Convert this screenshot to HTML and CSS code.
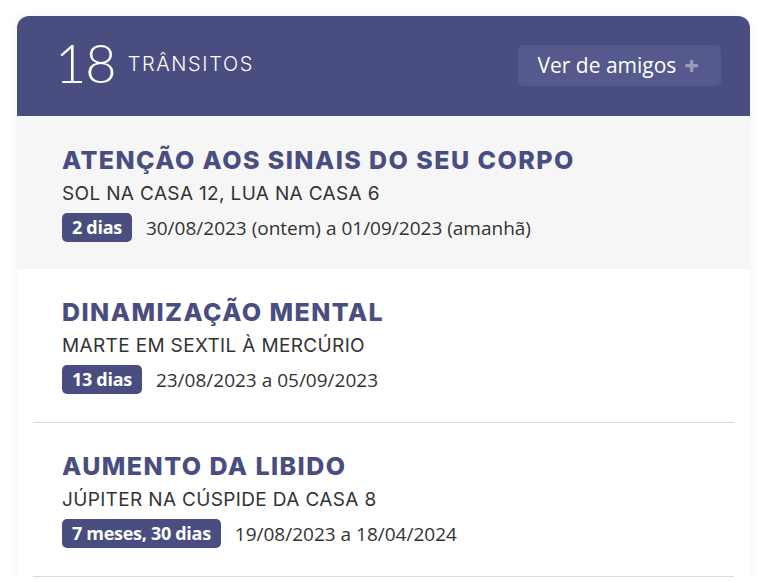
FILE: index.html
```html
<!DOCTYPE html>
<html lang="pt">
<head>
<meta charset="utf-8">
<link rel="stylesheet" href="styles.css">
</head>
<body>
<div class="card">
  <div class="header">
    <div class="count">
      <span class="num">18</span>
      <span class="label">TRÂNSITOS</span>
    </div>
    <button class="friends">Ver de amigos <span class="plus">+</span></button>
  </div>
  <div class="item current">
    <div class="inner">
      <h2 class="title">ATENÇÃO AOS SINAIS DO SEU CORPO</h2>
      <div class="sub">SOL NA CASA 12, LUA NA CASA 6</div>
      <div class="meta"><span class="badge">2 dias</span><span class="dates">30/08/2023 (ontem) a 01/09/2023 (amanhã)</span></div>
    </div>
  </div>
  <div class="item">
    <div class="inner">
      <h2 class="title">DINAMIZAÇÃO MENTAL</h2>
      <div class="sub">MARTE EM SEXTIL À MERCÚRIO</div>
      <div class="meta"><span class="badge">13 dias</span><span class="dates">23/08/2023 a 05/09/2023</span></div>
    </div>
  </div>
  <div class="item">
    <div class="inner">
      <h2 class="title">AUMENTO DA LIBIDO</h2>
      <div class="sub">JÚPITER NA CÚSPIDE DA CASA 8</div>
      <div class="meta"><span class="badge">7 meses, 30 dias</span><span class="dates">19/08/2023 a 18/04/2024</span></div>
    </div>
  </div>
</div>
</body>
</html>
```

FILE: styles.css
```css
html, body {
  margin: 0;
  padding: 0;
  background: #ffffff;
}
body {
  padding: 16px 24px 0 17px;
  font-family: "Open Sans", "Liberation Sans", sans-serif;
}
.card {
  width: 733px;
  background: #ffffff;
  border-radius: 12px 12px 0 0;
  box-shadow: 0 0 10px rgba(0, 0, 0, 0.06);
}
.header {
  height: 100px;
  box-sizing: border-box;
  background: #4a4d80;
  border-radius: 12px 12px 0 0;
  display: flex;
  align-items: center;
  justify-content: space-between;
  padding: 0 29px 0 38px;
  color: #ffffff;
}
.count {
  display: flex;
  align-items: center;
  gap: 12px;
}
.num {
  font-family: "Lato", sans-serif;
  font-weight: 300;
  font-size: 54px;
  line-height: 1;
  letter-spacing: -1px;
  margin-top: -6px;
}
.label {
  font-family: "Inter", sans-serif;
  font-weight: 300;
  font-size: 20px;
  letter-spacing: 1.6px;
  margin-top: -4px;
}
.friends {
  background: #55598c;
  border: none;
  border-radius: 5px;
  color: #ffffff;
  font-family: "Open Sans", sans-serif;
  font-size: 21px;
  height: 41px;
  padding: 0 22px 0 19px;
  display: flex;
  align-items: center;
  gap: 8px;
  margin-top: -2px;
}
.plus {
  color: #9a9cbb;
  font-weight: 800;
  font-size: 25px;
}
.item {
  padding: 0 16px;
}
.item.current {
  background: #f6f6f6;
}
.inner {
  padding: 27px 0 28px 29px;
  border-bottom: 1px solid #d9d9d9;
}
.item.current .inner {
  border-bottom: none;
  padding-top: 28px;
  padding-bottom: 27px;
}
.title {
  margin: 0;
  font-family: "Inter", sans-serif;
  font-weight: 800;
  font-size: 25px;
  line-height: 32px;
  color: #4a4d80;
  letter-spacing: 1.45px;
}
.sub {
  margin-top: 6px;
  font-family: "Inter", sans-serif;
  font-size: 19px;
  line-height: 24px;
  color: #333333;
  letter-spacing: 0.35px;
}
.meta {
  margin-top: 7px;
  display: flex;
  align-items: center;
  gap: 14px;
}
.badge {
  background: #4a4d80;
  color: #ffffff;
  font-weight: 700;
  font-size: 18px;
  line-height: 29px;
  padding: 0 10px;
  border-radius: 5px;
  letter-spacing: -0.3px;
}
.dates {
  font-size: 19px;
  color: #333333;
}
```
